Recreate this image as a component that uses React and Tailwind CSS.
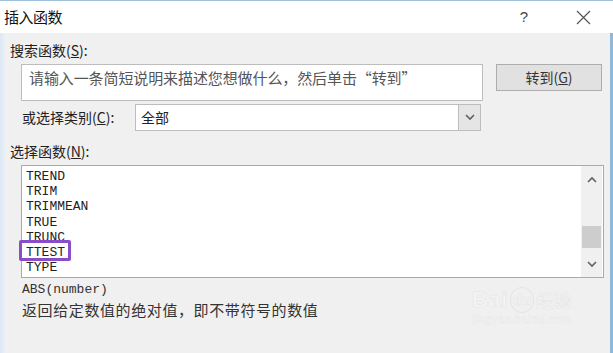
import React from 'react';

const cjk = { fontFamily: '"Noto Sans CJK SC", "Liberation Sans", sans-serif' };
const mono = { fontFamily: '"Liberation Mono", "Noto Sans CJK SC", monospace' };

const Chevron = ({ up }) => (
  <svg width="10" height="7" viewBox="0 0 10 7">
    <path d={up ? 'M1 6 L5 2 L9 6' : 'M1 1 L5 5 L9 1'} fill="none" stroke="#606060" strokeWidth="1.6" />
  </svg>
);

const functions = ['TREND', 'TRIM', 'TRIMMEAN', 'TRUE', 'TRUNC', 'TTEST', 'TYPE'];

export default function App() {
  return (
    <div className="w-[613px] h-[353px] flex flex-col bg-[#f0f0f0] overflow-hidden border-t border-[#9fc3de]" style={cjk}>
      {/* Title bar */}
      <div className="h-[32px] shrink-0 bg-white flex items-center pl-[4px] pr-[22px]">
        <span className="text-[15px] text-[#111] tracking-[-0.5px]">插入函数</span>
        <span className="ml-auto text-[15px] text-[#444] mr-[48px]" style={{ fontFamily: '"Liberation Sans", sans-serif' }}>?</span>
        <svg width="15" height="15" viewBox="0 0 15 15">
          <path d="M1 1 L14 14 M14 1 L1 14" stroke="#555" strokeWidth="1.2" />
        </svg>
      </div>

      <div className="flex flex-1">
        <div className="w-[6px] bg-gradient-to-r from-[#dbe8f4] to-[#eef2f5]" />
        <div className="flex-1 flex flex-col pt-[6px] text-[14px] text-[#222]">
          <div className="h-[22px] flex items-center pl-[4px]">
            搜索函数(<span className="underline">S</span>):
          </div>
          <div className="flex items-start mt-[3px] pl-[15px]">
            <div className="w-[462px] h-[37px] bg-white border border-[#bdbdbd] pl-[7px] pt-[2px] text-[15px] text-[#555] tracking-[-0.1px]">
              请输入一条简短说明来描述您想做什么，然后单击“转到”
            </div>
            <button className="ml-[13px] w-[106px] h-[27px] bg-[#e1e1e1] border border-[#adadad] text-[14px] text-[#333]">
              转到(<span className="underline">G</span>)
            </button>
          </div>
          <div className="flex items-center mt-[3px] pl-[16px]">
            <span className="w-[113px]">或选择类别(<span className="underline">C</span>):</span>
            <div className="w-[346px] h-[27px] bg-white border border-[#bdbdbd] flex items-center">
              <span className="pl-[5px] flex-1">全部</span>
              <div className="w-[22px] h-full bg-[#e5e5e5] border-l border-[#bdbdbd] flex items-center justify-center">
                <Chevron />
              </div>
            </div>
          </div>
          <div className="h-[22px] flex items-center pl-[4px] mt-[9px]">
            选择函数(<span className="underline">N</span>):
          </div>
          <div className="ml-[15px] mt-[3px] w-[583px] h-[113px] bg-white border border-[#a9a9a9] flex">
            <div className="flex-1 pt-[3px] pl-[4px] text-[13px] leading-[15.2px] text-[#222]" style={mono}>
              {functions.map((f) => (
                <div key={f} className="h-[15.2px]">
                  {f === 'TTEST' ? (
                    <span className="relative inline-block">
                      TTEST
                      <span className="absolute -left-[7px] -top-[5px] w-[52px] h-[21px] border-[3px] border-[#8a4cc8] rounded-[2px]" />
                    </span>
                  ) : (
                    f
                  )}
                </div>
              ))}
            </div>
            <div className="w-[21px] mr-[1px] bg-[#f0f0f0] flex flex-col items-center">
              <div className="h-[26px] flex items-center justify-center"><Chevron up /></div>
              <div className="flex-1" />
              <div className="w-[19px] h-[22px] bg-[#cdcdcd] mb-[3px]" />
              <div className="h-[26px] flex items-center justify-center"><Chevron /></div>
            </div>
          </div>
          <div className="pl-[16px] mt-[4px] text-[13px] leading-[16px] text-[#333]" style={mono}>
            ABS(number)
          </div>
          <div className="relative pl-[16px] mt-[3px] text-[15px] leading-[18px] text-[#333] tracking-[0.6px]">
            返回给定数值的绝对值，即不带符号的数值
            <div className="absolute left-[466px] -top-[14px] flex flex-col items-center text-[#f7f7f7] opacity-60">
              <div className="flex items-center text-[22px] font-bold leading-[24px]" style={{ fontFamily: '"Liberation Sans", sans-serif', WebkitTextStroke: '0.5px #dddddd' }}>
                Bai<span className="mx-[2px] px-[2px] rounded-full border border-[#dddddd] text-[14px]">du</span>
                <span className="text-[17px]" style={cjk}>经验</span>
              </div>
              <div className="text-[11px] leading-[12px] text-[#f7f7f7]" style={{ fontFamily: '"Liberation Sans", sans-serif', WebkitTextStroke: '0.3px #dddddd' }}>
                jingyan.baidu.com
              </div>
            </div>
          </div>
        </div>
        <div className="w-[3px] bg-[#8fb9da]" />
      </div>
    </div>
  );
}
